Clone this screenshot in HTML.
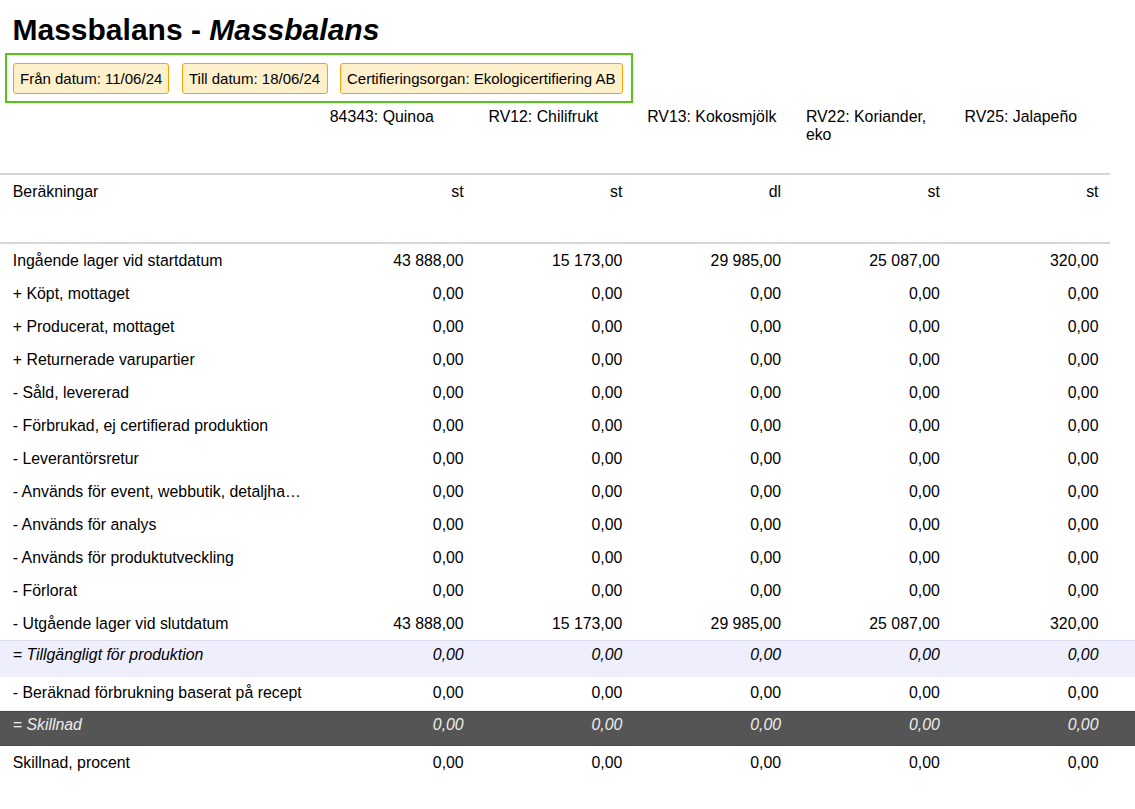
<!DOCTYPE html>
<html><head><meta charset="utf-8">
<style>
html,body{margin:0;padding:0;background:#fff;}
body{font-family:"Liberation Sans",sans-serif;color:#000;width:1135px;height:809px;overflow:hidden;position:relative;}
h1{position:absolute;left:12.5px;top:13px;margin:0;font-size:30px;font-weight:bold;line-height:34px;white-space:nowrap;}
.filters{position:absolute;left:5px;top:53px;width:624px;height:46px;border:2px solid #52c41a;}
.chip{position:absolute;top:8px;height:31px;border:1px solid #f8a10c;border-radius:3px;background:#fff0cc;font-size:15px;line-height:29px;padding:0 6px;box-sizing:border-box;white-space:nowrap;}
.r{position:absolute;left:0;width:1135px;font-size:15.85px;line-height:18px;}
.c{position:absolute;white-space:nowrap;}
.n{position:absolute;white-space:nowrap;text-align:right;width:150px;}
.hl{position:absolute;left:0;width:1110px;height:2px;background:#d6d6d6;}
.lav{background:#eeeefc;border-top:1px solid #dcdcf0;box-sizing:border-box;}
.dark{background:#555;color:#eee;border-top:1px solid #4a4a4a;border-bottom:1px solid #4a4a4a;box-sizing:border-box;}
i{font-style:italic;}
</style></head><body>
<h1>Massbalans - <i>Massbalans</i></h1>
<div class="filters">
<div class="chip" style="left:6px;width:156px;">Från datum: 11/06/24</div>
<div class="chip" style="left:175px;width:146px;">Till datum: 18/06/24</div>
<div class="chip" style="left:333px;width:283px;">Certifieringsorgan: Ekologicertifiering AB</div>
</div>
<div class="r" style="top:103px;height:70px;"><div class="c" style="left:329.8px;top:5px;">84343: Quinoa</div><div class="c" style="left:488.5px;top:5px;">RV12: Chilifrukt</div><div class="c" style="left:647.2px;top:5px;">RV13: Kokosmjölk</div><div class="c" style="left:805.9px;top:5px;">RV22: Koriander,<br>eko</div><div class="c" style="left:964.6px;top:5px;">RV25: Jalapeño</div></div>
<div class="hl" style="top:173px;"></div>
<div class="r " style="top:175px;height:67px;"><div class="c" style="left:12.8px;top:8px;">Beräkningar</div><div class="n" style="left:313.7px;top:8px;">st</div><div class="n" style="left:472.4px;top:8px;">st</div><div class="n" style="left:631.1px;top:8px;">dl</div><div class="n" style="left:789.8px;top:8px;">st</div><div class="n" style="left:948.5px;top:8px;">st</div></div>
<div class="hl" style="top:242px;"></div>
<div class="r " style="top:244px;height:33px;"><div class="c" style="left:12.8px;top:8px;">Ingående lager vid startdatum</div><div class="n" style="left:313.7px;top:8px;">43 888,00</div><div class="n" style="left:472.4px;top:8px;">15 173,00</div><div class="n" style="left:631.1px;top:8px;">29 985,00</div><div class="n" style="left:789.8px;top:8px;">25 087,00</div><div class="n" style="left:948.5px;top:8px;">320,00</div></div>
<div class="r " style="top:277px;height:33px;"><div class="c" style="left:12.8px;top:8px;">+ Köpt, mottaget</div><div class="n" style="left:313.7px;top:8px;">0,00</div><div class="n" style="left:472.4px;top:8px;">0,00</div><div class="n" style="left:631.1px;top:8px;">0,00</div><div class="n" style="left:789.8px;top:8px;">0,00</div><div class="n" style="left:948.5px;top:8px;">0,00</div></div>
<div class="r " style="top:310px;height:33px;"><div class="c" style="left:12.8px;top:8px;">+ Producerat, mottaget</div><div class="n" style="left:313.7px;top:8px;">0,00</div><div class="n" style="left:472.4px;top:8px;">0,00</div><div class="n" style="left:631.1px;top:8px;">0,00</div><div class="n" style="left:789.8px;top:8px;">0,00</div><div class="n" style="left:948.5px;top:8px;">0,00</div></div>
<div class="r " style="top:343px;height:33px;"><div class="c" style="left:12.8px;top:8px;">+ Returnerade varupartier</div><div class="n" style="left:313.7px;top:8px;">0,00</div><div class="n" style="left:472.4px;top:8px;">0,00</div><div class="n" style="left:631.1px;top:8px;">0,00</div><div class="n" style="left:789.8px;top:8px;">0,00</div><div class="n" style="left:948.5px;top:8px;">0,00</div></div>
<div class="r " style="top:376px;height:33px;"><div class="c" style="left:12.8px;top:8px;">- Såld, levererad</div><div class="n" style="left:313.7px;top:8px;">0,00</div><div class="n" style="left:472.4px;top:8px;">0,00</div><div class="n" style="left:631.1px;top:8px;">0,00</div><div class="n" style="left:789.8px;top:8px;">0,00</div><div class="n" style="left:948.5px;top:8px;">0,00</div></div>
<div class="r " style="top:409px;height:33px;"><div class="c" style="left:12.8px;top:8px;">- Förbrukad, ej certifierad produktion</div><div class="n" style="left:313.7px;top:8px;">0,00</div><div class="n" style="left:472.4px;top:8px;">0,00</div><div class="n" style="left:631.1px;top:8px;">0,00</div><div class="n" style="left:789.8px;top:8px;">0,00</div><div class="n" style="left:948.5px;top:8px;">0,00</div></div>
<div class="r " style="top:442px;height:33px;"><div class="c" style="left:12.8px;top:8px;">- Leverantörsretur</div><div class="n" style="left:313.7px;top:8px;">0,00</div><div class="n" style="left:472.4px;top:8px;">0,00</div><div class="n" style="left:631.1px;top:8px;">0,00</div><div class="n" style="left:789.8px;top:8px;">0,00</div><div class="n" style="left:948.5px;top:8px;">0,00</div></div>
<div class="r " style="top:475px;height:33px;"><div class="c" style="left:12.8px;top:8px;">- Används för event, webbutik, detaljha…</div><div class="n" style="left:313.7px;top:8px;">0,00</div><div class="n" style="left:472.4px;top:8px;">0,00</div><div class="n" style="left:631.1px;top:8px;">0,00</div><div class="n" style="left:789.8px;top:8px;">0,00</div><div class="n" style="left:948.5px;top:8px;">0,00</div></div>
<div class="r " style="top:508px;height:33px;"><div class="c" style="left:12.8px;top:8px;">- Används för analys</div><div class="n" style="left:313.7px;top:8px;">0,00</div><div class="n" style="left:472.4px;top:8px;">0,00</div><div class="n" style="left:631.1px;top:8px;">0,00</div><div class="n" style="left:789.8px;top:8px;">0,00</div><div class="n" style="left:948.5px;top:8px;">0,00</div></div>
<div class="r " style="top:541px;height:33px;"><div class="c" style="left:12.8px;top:8px;">- Används för produktutveckling</div><div class="n" style="left:313.7px;top:8px;">0,00</div><div class="n" style="left:472.4px;top:8px;">0,00</div><div class="n" style="left:631.1px;top:8px;">0,00</div><div class="n" style="left:789.8px;top:8px;">0,00</div><div class="n" style="left:948.5px;top:8px;">0,00</div></div>
<div class="r " style="top:574px;height:33px;"><div class="c" style="left:12.8px;top:8px;">- Förlorat</div><div class="n" style="left:313.7px;top:8px;">0,00</div><div class="n" style="left:472.4px;top:8px;">0,00</div><div class="n" style="left:631.1px;top:8px;">0,00</div><div class="n" style="left:789.8px;top:8px;">0,00</div><div class="n" style="left:948.5px;top:8px;">0,00</div></div>
<div class="r " style="top:607px;height:33px;"><div class="c" style="left:12.8px;top:8px;">- Utgående lager vid slutdatum</div><div class="n" style="left:313.7px;top:8px;">43 888,00</div><div class="n" style="left:472.4px;top:8px;">15 173,00</div><div class="n" style="left:631.1px;top:8px;">29 985,00</div><div class="n" style="left:789.8px;top:8px;">25 087,00</div><div class="n" style="left:948.5px;top:8px;">320,00</div></div>
<div class="r lav" style="top:640px;height:37px;"><div class="c" style="left:12.8px;top:5px;"><i>= Tillgängligt för produktion</i></div><div class="n" style="left:313.7px;top:5px;"><i>0,00</i></div><div class="n" style="left:472.4px;top:5px;"><i>0,00</i></div><div class="n" style="left:631.1px;top:5px;"><i>0,00</i></div><div class="n" style="left:789.8px;top:5px;"><i>0,00</i></div><div class="n" style="left:948.5px;top:5px;"><i>0,00</i></div></div>
<div class="r " style="top:677px;height:34px;"><div class="c" style="left:12.8px;top:7px;">- Beräknad förbrukning baserat på recept</div><div class="n" style="left:313.7px;top:7px;">0,00</div><div class="n" style="left:472.4px;top:7px;">0,00</div><div class="n" style="left:631.1px;top:7px;">0,00</div><div class="n" style="left:789.8px;top:7px;">0,00</div><div class="n" style="left:948.5px;top:7px;">0,00</div></div>
<div class="r" style="top:710px;height:1px;background:#f4f4fd;"></div>
<div class="r dark" style="top:711px;height:35px;"><div class="c" style="left:12.8px;top:4px;"><i>= Skillnad</i></div><div class="n" style="left:313.7px;top:4px;"><i>0,00</i></div><div class="n" style="left:472.4px;top:4px;"><i>0,00</i></div><div class="n" style="left:631.1px;top:4px;"><i>0,00</i></div><div class="n" style="left:789.8px;top:4px;"><i>0,00</i></div><div class="n" style="left:948.5px;top:4px;"><i>0,00</i></div></div>
<div class="r " style="top:746px;height:34px;"><div class="c" style="left:12.8px;top:8px;">Skillnad, procent</div><div class="n" style="left:313.7px;top:8px;">0,00</div><div class="n" style="left:472.4px;top:8px;">0,00</div><div class="n" style="left:631.1px;top:8px;">0,00</div><div class="n" style="left:789.8px;top:8px;">0,00</div><div class="n" style="left:948.5px;top:8px;">0,00</div></div>
</body></html>
